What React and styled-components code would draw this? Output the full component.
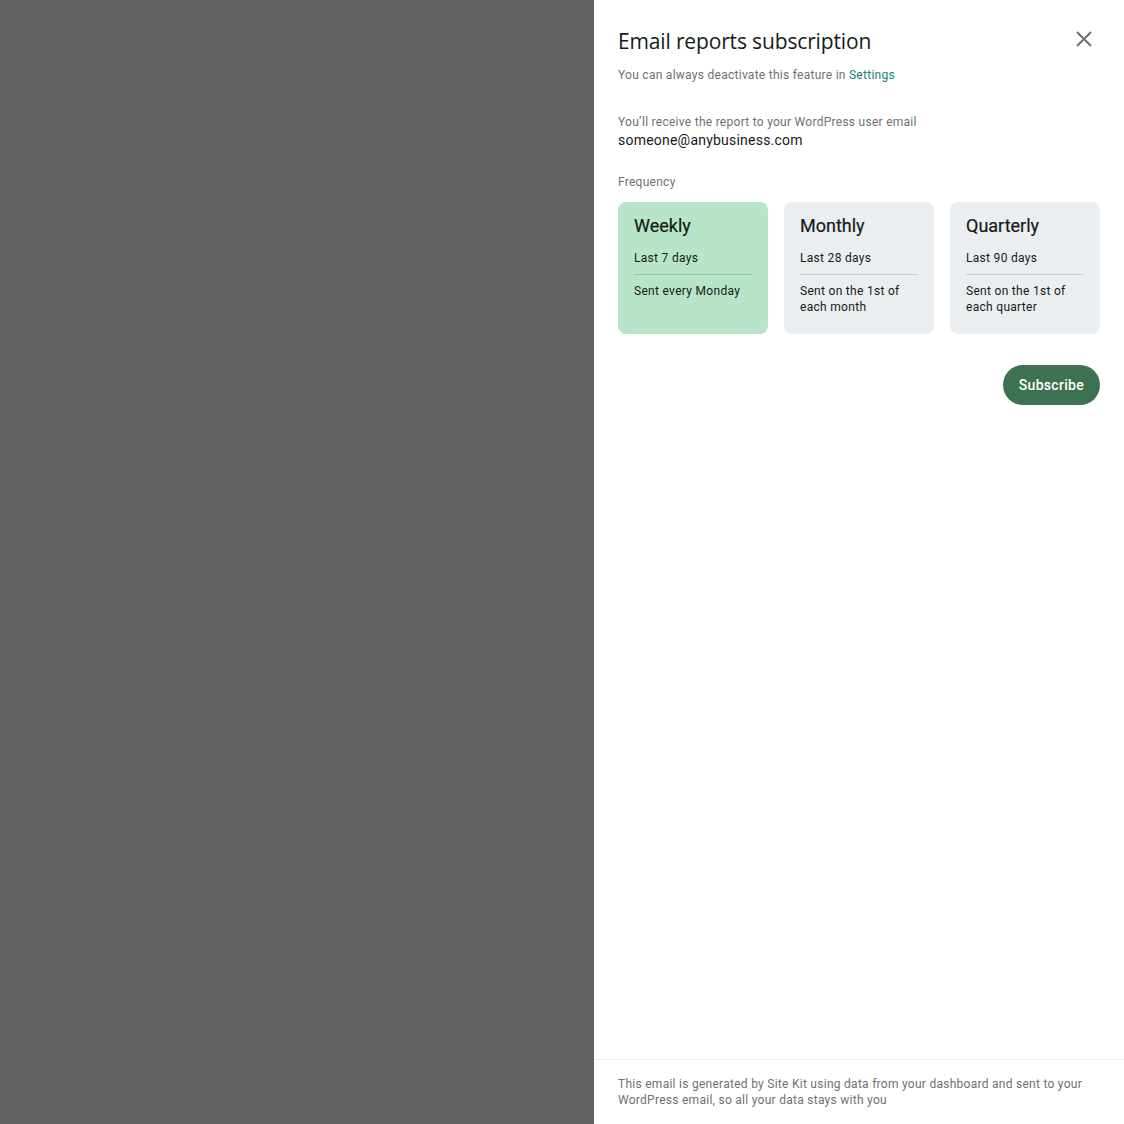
import React from "react";
import styled, { createGlobalStyle } from "styled-components";

const Global = createGlobalStyle`
  html, body { margin: 0; padding: 0; height: 100%; }
  body { font-family: Roboto, "Noto Sans", Arial, sans-serif; }
  #root { height: 100%; }
`;

const Screen = styled.div`
  display: flex;
  width: 1124px;
  height: 1124px;
  background: #626262;
`;

const Backdrop = styled.div`
  flex: 1;
`;

const Panel = styled.aside`
  width: 530px;
  background: #fff;
  display: flex;
  flex-direction: column;
`;

const Body = styled.div`
  flex: 1;
  padding: 27px 24px 0 24px;
  display: flex;
  flex-direction: column;
`;

const Header = styled.div`
  display: flex;
  justify-content: space-between;
  align-items: flex-start;
`;

const Title = styled.h1`
  margin: 0;
  font-family: "Open Sans", Roboto, sans-serif;
  font-weight: 400;
  font-size: 21px;
  line-height: 28px;
  color: #161b18;
  letter-spacing: -0.15px;
`;

const CloseButton = styled.button`
  border: 0;
  background: none;
  padding: 0;
  width: 24px;
  height: 24px;
  margin-top: 0;
  margin-right: 4px;
  display: flex;
  align-items: center;
  justify-content: center;
  color: #6c726e;
  cursor: pointer;
`;

const Muted = styled.p`
  margin: ${(p) => p.$mt || 0}px 0 0 0;
  font-size: 12px;
  line-height: 16px;
  letter-spacing: 0.27px;
  color: #6c726e;
`;

const Link = styled.a`
  color: #108080;
  text-decoration: none;
`;

const Email = styled.div`
  font-size: 14px;
  line-height: 20px;
  color: #161b18;
  letter-spacing: 0.22px;
`;

const Cards = styled.div`
  display: grid;
  grid-template-columns: repeat(3, 150px);
  gap: 16px;
  margin-top: 12px;
`;

const Card = styled.div`
  background: ${(p) => (p.$active ? "#b8e5ca" : "#ebeef0")};
  border-radius: 8px;
  padding: 12px 16px 19px 16px;
  box-sizing: border-box;
  display: flex;
  flex-direction: column;
`;

const CardTitle = styled.div`
  font-size: 18px;
  line-height: 24px;
  font-weight: 400;
  letter-spacing: 0;
  color: #161b18;
  -webkit-text-stroke: 0.2px #161b18;
`;

const CardRange = styled.div`
  margin-top: 12px;
  font-size: 12px;
  line-height: 16px;
  letter-spacing: 0.3px;
  color: #161b18;
  padding-bottom: 8px;
  border-bottom: 1px solid ${(p) => (p.$active ? "#8fc9a6" : "#cbd0d3")};
`;

const CardNote = styled.div`
  margin-top: 8px;
  font-size: 12px;
  line-height: 16px;
  letter-spacing: 0.3px;
  color: #161b18;
`;

const Actions = styled.div`
  display: flex;
  justify-content: flex-end;
  margin-top: 31px;
`;

const Primary = styled.button`
  border: 0;
  background: #3c7251;
  color: #fff;
  height: 40px;
  padding: 0 16px;
  border-radius: 20px;
  font-family: Roboto, sans-serif;
  font-size: 14px;
  font-weight: 500;
  letter-spacing: 0.3px;
  cursor: pointer;
`;

const Footer = styled.footer`
  border-top: 1px solid #ebeef0;
  padding: 16px 24px 16px 24px;
  height: 65px;
  box-sizing: border-box;
`;

const frequencies = [
  { name: "Weekly", range: "Last 7 days", note: "Sent every Monday", active: true },
  { name: "Monthly", range: "Last 28 days", note: "Sent on the 1st of each month" },
  { name: "Quarterly", range: "Last 90 days", note: "Sent on the 1st of each quarter" },
];

export default function App() {
  return (
    <>
      <Global />
      <Screen>
        <Backdrop />
        <Panel>
          <Body>
            <Header>
              <Title>Email reports subscription</Title>
              <CloseButton aria-label="Close">
                <svg width="18" height="18" viewBox="0 0 18 18">
                  <path d="M2 2L16 16M16 2L2 16" stroke="currentColor" strokeWidth="2" fill="none" />
                </svg>
              </CloseButton>
            </Header>
            <Muted $mt={12}>
              You can always deactivate this feature in <Link href="#">Settings</Link>
            </Muted>
            <Muted $mt={31}>You’ll receive the report to your WordPress user email</Muted>
            <Email>someone@anybusiness.com</Email>
            <Muted $mt={24}>Frequency</Muted>
            <Cards>
              {frequencies.map((f) => (
                <Card key={f.name} $active={f.active}>
                  <CardTitle>{f.name}</CardTitle>
                  <CardRange $active={f.active}>{f.range}</CardRange>
                  <CardNote>{f.note}</CardNote>
                </Card>
              ))}
            </Cards>
            <Actions>
              <Primary>Subscribe</Primary>
            </Actions>
          </Body>
          <Footer>
            <Muted>
              This email is generated by Site Kit using data from your dashboard and sent to your
              WordPress email, so all your data stays with you
            </Muted>
          </Footer>
        </Panel>
      </Screen>
    </>
  );
}
